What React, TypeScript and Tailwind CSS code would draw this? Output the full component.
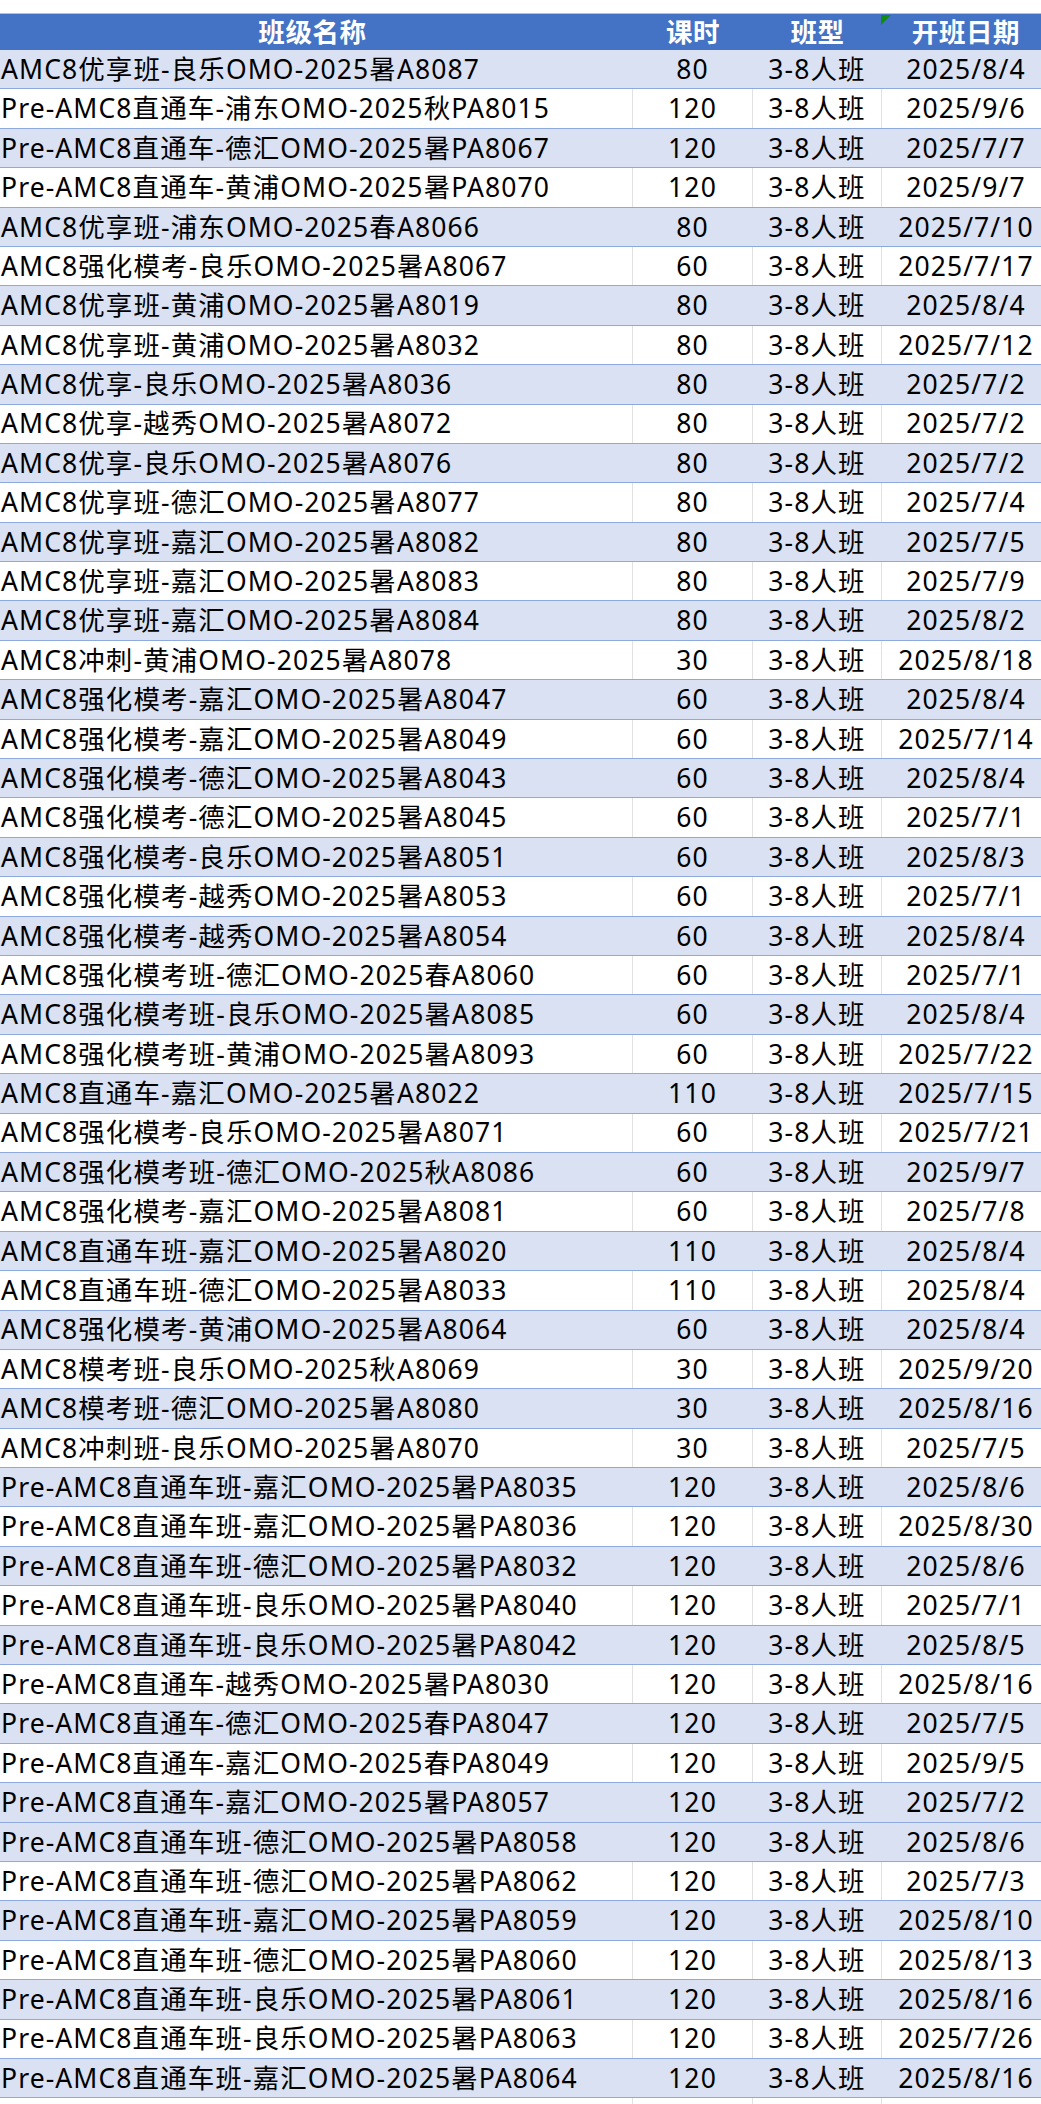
import React from "react";

type Row = [string, number, string];

const rows: Row[] = [
  ["AMC8优享班-良乐OMO-2025暑A8087", 80, "2025/8/4"],
  ["Pre-AMC8直通车-浦东OMO-2025秋PA8015", 120, "2025/9/6"],
  ["Pre-AMC8直通车-德汇OMO-2025暑PA8067", 120, "2025/7/7"],
  ["Pre-AMC8直通车-黄浦OMO-2025暑PA8070", 120, "2025/9/7"],
  ["AMC8优享班-浦东OMO-2025春A8066", 80, "2025/7/10"],
  ["AMC8强化模考-良乐OMO-2025暑A8067", 60, "2025/7/17"],
  ["AMC8优享班-黄浦OMO-2025暑A8019", 80, "2025/8/4"],
  ["AMC8优享班-黄浦OMO-2025暑A8032", 80, "2025/7/12"],
  ["AMC8优享-良乐OMO-2025暑A8036", 80, "2025/7/2"],
  ["AMC8优享-越秀OMO-2025暑A8072", 80, "2025/7/2"],
  ["AMC8优享-良乐OMO-2025暑A8076", 80, "2025/7/2"],
  ["AMC8优享班-德汇OMO-2025暑A8077", 80, "2025/7/4"],
  ["AMC8优享班-嘉汇OMO-2025暑A8082", 80, "2025/7/5"],
  ["AMC8优享班-嘉汇OMO-2025暑A8083", 80, "2025/7/9"],
  ["AMC8优享班-嘉汇OMO-2025暑A8084", 80, "2025/8/2"],
  ["AMC8冲刺-黄浦OMO-2025暑A8078", 30, "2025/8/18"],
  ["AMC8强化模考-嘉汇OMO-2025暑A8047", 60, "2025/8/4"],
  ["AMC8强化模考-嘉汇OMO-2025暑A8049", 60, "2025/7/14"],
  ["AMC8强化模考-德汇OMO-2025暑A8043", 60, "2025/8/4"],
  ["AMC8强化模考-德汇OMO-2025暑A8045", 60, "2025/7/1"],
  ["AMC8强化模考-良乐OMO-2025暑A8051", 60, "2025/8/3"],
  ["AMC8强化模考-越秀OMO-2025暑A8053", 60, "2025/7/1"],
  ["AMC8强化模考-越秀OMO-2025暑A8054", 60, "2025/8/4"],
  ["AMC8强化模考班-德汇OMO-2025春A8060", 60, "2025/7/1"],
  ["AMC8强化模考班-良乐OMO-2025暑A8085", 60, "2025/8/4"],
  ["AMC8强化模考班-黄浦OMO-2025暑A8093", 60, "2025/7/22"],
  ["AMC8直通车-嘉汇OMO-2025暑A8022", 110, "2025/7/15"],
  ["AMC8强化模考-良乐OMO-2025暑A8071", 60, "2025/7/21"],
  ["AMC8强化模考班-德汇OMO-2025秋A8086", 60, "2025/9/7"],
  ["AMC8强化模考-嘉汇OMO-2025暑A8081", 60, "2025/7/8"],
  ["AMC8直通车班-嘉汇OMO-2025暑A8020", 110, "2025/8/4"],
  ["AMC8直通车班-德汇OMO-2025暑A8033", 110, "2025/8/4"],
  ["AMC8强化模考-黄浦OMO-2025暑A8064", 60, "2025/8/4"],
  ["AMC8模考班-良乐OMO-2025秋A8069", 30, "2025/9/20"],
  ["AMC8模考班-德汇OMO-2025暑A8080", 30, "2025/8/16"],
  ["AMC8冲刺班-良乐OMO-2025暑A8070", 30, "2025/7/5"],
  ["Pre-AMC8直通车班-嘉汇OMO-2025暑PA8035", 120, "2025/8/6"],
  ["Pre-AMC8直通车班-嘉汇OMO-2025暑PA8036", 120, "2025/8/30"],
  ["Pre-AMC8直通车班-德汇OMO-2025暑PA8032", 120, "2025/8/6"],
  ["Pre-AMC8直通车班-良乐OMO-2025暑PA8040", 120, "2025/7/1"],
  ["Pre-AMC8直通车班-良乐OMO-2025暑PA8042", 120, "2025/8/5"],
  ["Pre-AMC8直通车-越秀OMO-2025暑PA8030", 120, "2025/8/16"],
  ["Pre-AMC8直通车-德汇OMO-2025春PA8047", 120, "2025/7/5"],
  ["Pre-AMC8直通车-嘉汇OMO-2025春PA8049", 120, "2025/9/5"],
  ["Pre-AMC8直通车-嘉汇OMO-2025暑PA8057", 120, "2025/7/2"],
  ["Pre-AMC8直通车班-德汇OMO-2025暑PA8058", 120, "2025/8/6"],
  ["Pre-AMC8直通车班-德汇OMO-2025暑PA8062", 120, "2025/7/3"],
  ["Pre-AMC8直通车班-嘉汇OMO-2025暑PA8059", 120, "2025/8/10"],
  ["Pre-AMC8直通车班-德汇OMO-2025暑PA8060", 120, "2025/8/13"],
  ["Pre-AMC8直通车班-良乐OMO-2025暑PA8061", 120, "2025/8/16"],
  ["Pre-AMC8直通车班-良乐OMO-2025暑PA8063", 120, "2025/7/26"],
  ["Pre-AMC8直通车班-嘉汇OMO-2025暑PA8064", 120, "2025/8/16"],
];

// banding: odd rows up to 45, then the pattern restarts at row 46
const isBanded = (i: number) => (i < 45 ? i % 2 === 0 : i % 2 === 1);

const cols = "grid grid-cols-[641px_120px_129px_168px]";

function DataRow({ row, banded }: { row: Row; banded: boolean }) {
  const [name, hours, date] = row;
  const cell = banded
    ? "border-r border-[#D9E1F2]"
    : "border-r border-[#E1E1E1]";
  return (
    <div
      className={`${cols} h-[39.4px] border-b border-[#8EA9DB] ${
        banded ? "bg-[#D9E1F2]" : "bg-white"
      }`}
    >
      <div className={`${cell} pl-[9px] flex items-center whitespace-nowrap`}>
        {name}
      </div>
      <div className={`${cell} flex items-center justify-center`}>{hours}</div>
      <div className={`${cell} flex items-center justify-center`}>3-8人班</div>
      <div className="flex items-center justify-center">{date}</div>
    </div>
  );
}

export default function App() {
  return (
    <div className="w-[1041px] h-[2104px] overflow-hidden bg-white text-black font-['Noto_Sans','Noto_Sans_CJK_SC',sans-serif] text-[26.5px] tracking-[1.1px] leading-none">
      <div className="-ml-[8px] w-[1058px] pt-[13px]">
        <div
          className={`${cols} h-[37px] border-t border-[#A9C0E8] bg-[#4472C4] text-white font-bold tracking-[0.6px]`}
        >
          <div className="flex items-center justify-center">班级名称</div>
          <div className="flex items-center justify-center">课时</div>
          <div className="flex items-center justify-center">班型</div>
          <div className="relative flex items-center justify-center">
            <svg
              className="absolute left-[-1px] top-[1px]"
              width="10"
              height="10"
              viewBox="0 0 10 10"
            >
              <polygon points="0,0 10,0 0,10" fill="#138A13" />
            </svg>
            开班日期
          </div>
        </div>
        {rows.map((r, i) => (
          <DataRow key={i} row={r} banded={isBanded(i)} />
        ))}
        <div className={`${cols} h-[20px]`}>
          <div className="border-r border-[#E1E1E1]" />
          <div className="border-r border-[#E1E1E1]" />
          <div className="border-r border-[#E1E1E1]" />
          <div />
        </div>
      </div>
    </div>
  );
}
